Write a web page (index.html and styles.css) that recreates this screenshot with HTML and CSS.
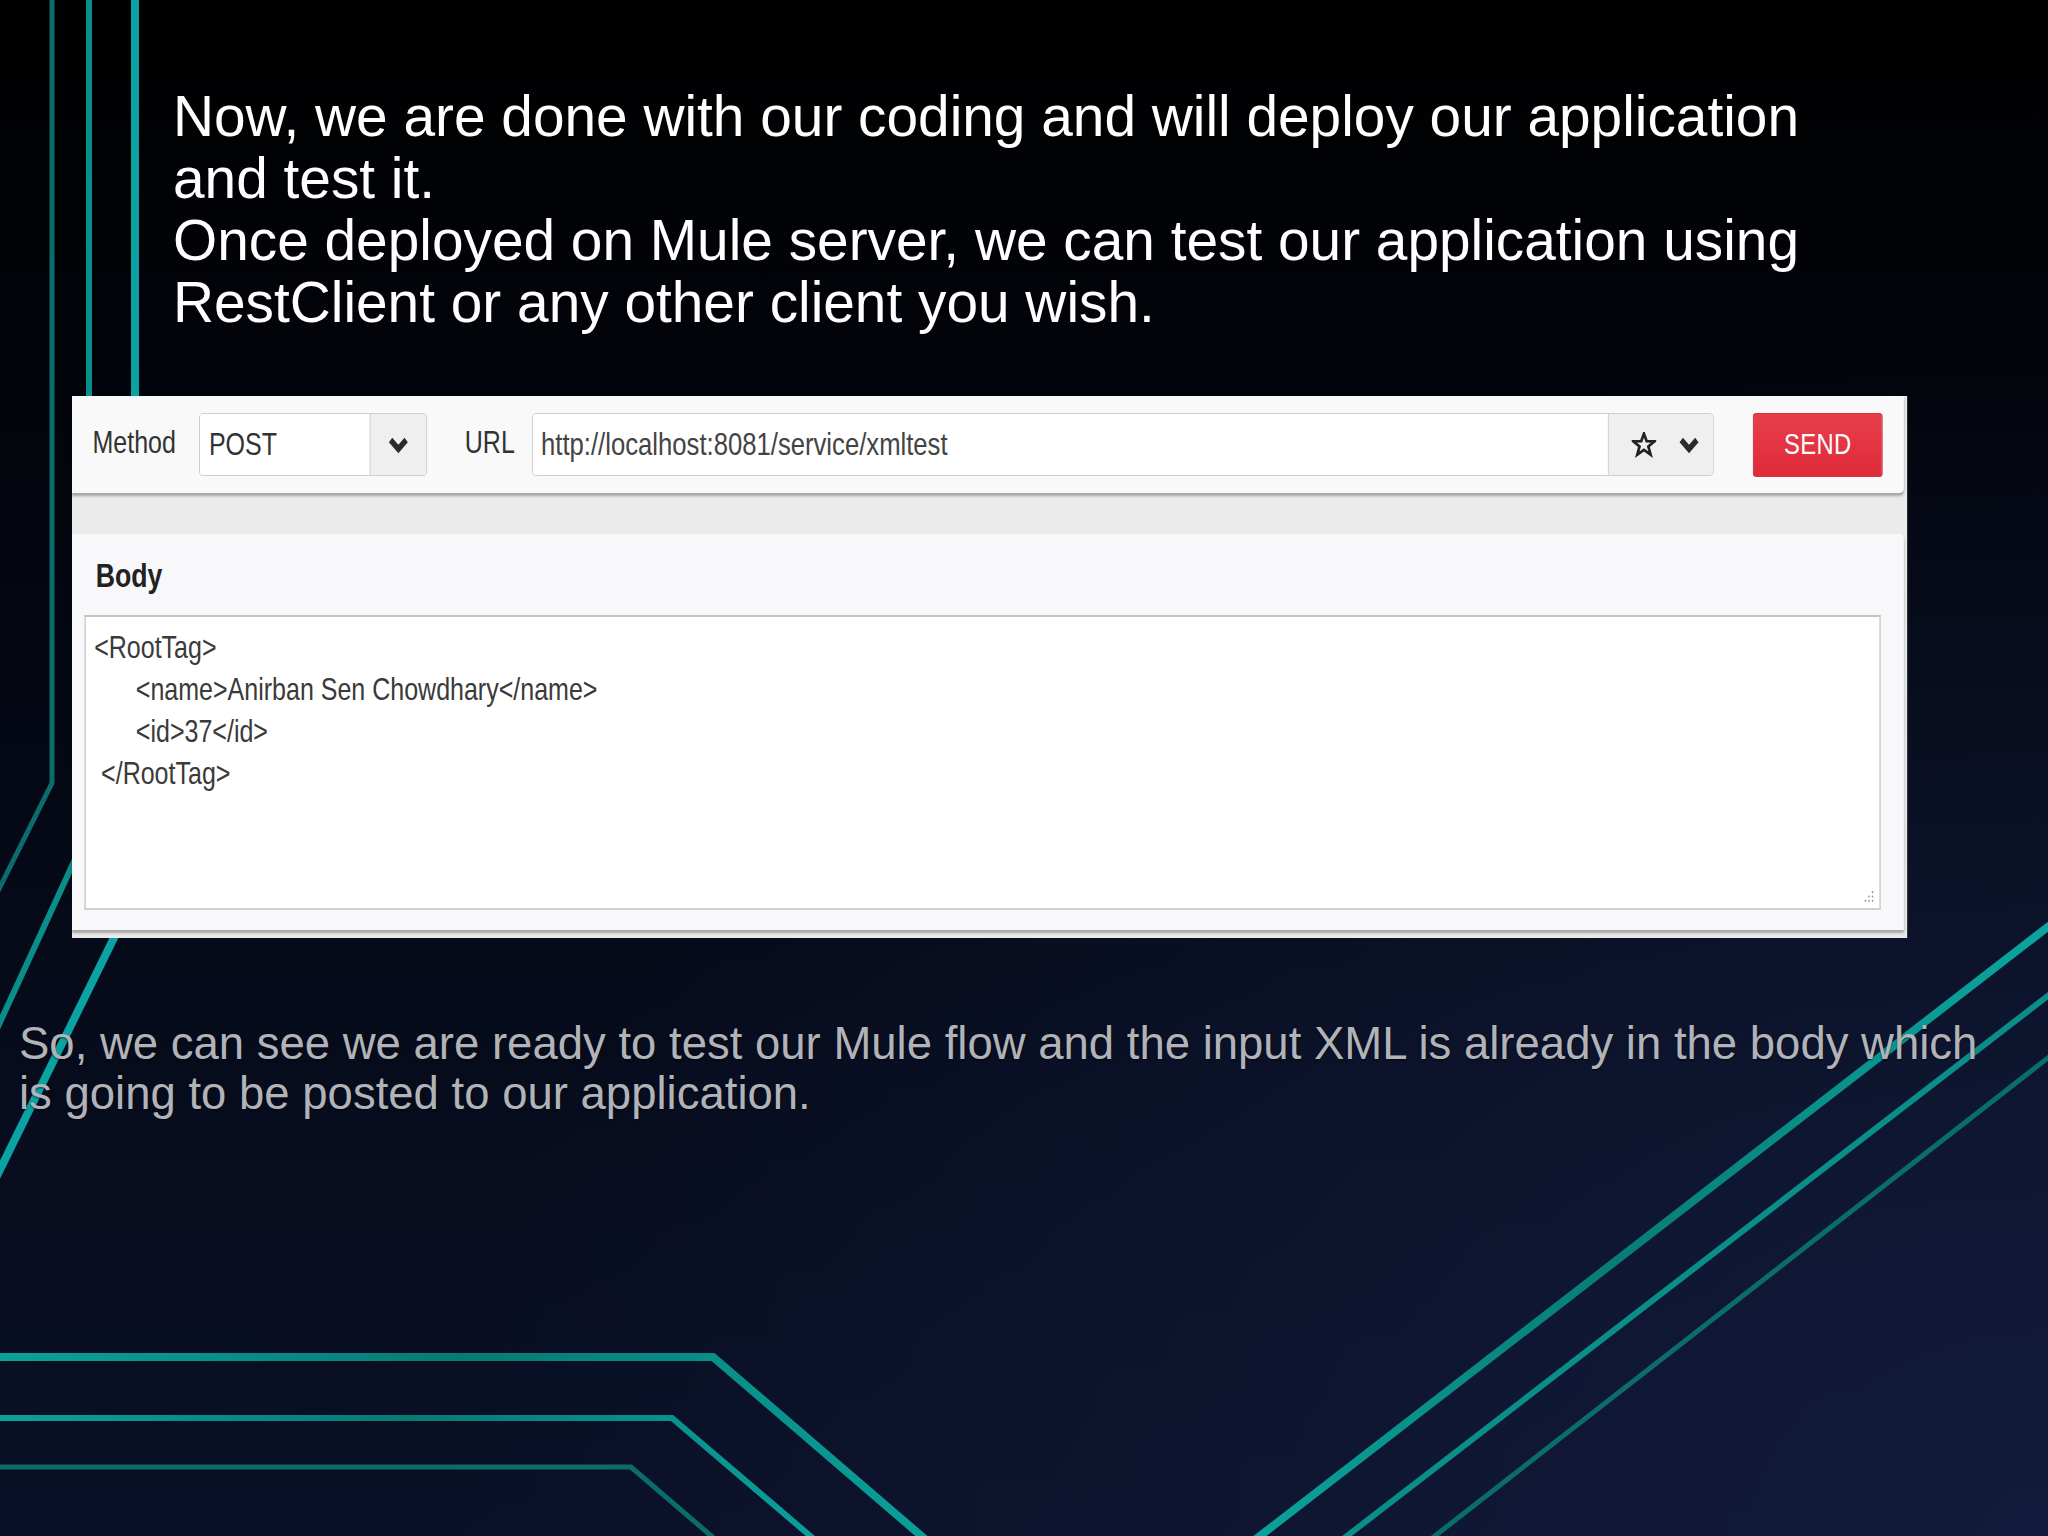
FILE: index.html
```html
<!DOCTYPE html>
<html lang="en">
<head>
    <meta charset="UTF-8">
    <title>Testing the Mule flow</title>
    <link rel="stylesheet" href="styles.css">
</head>
<body>
    <div class="slide">
        <!-- background strokes of the slide theme -->
        <svg class="deco" viewBox="0 0 2048 1536" width="2048" height="1536">
            <defs>
                <linearGradient id="hline" x1="0" y1="0" x2="1" y2="0">
                    <stop offset="0" stop-color="#0aa29c"/>
                    <stop offset="0.5" stop-color="#077a74"/>
                    <stop offset="1" stop-color="#0a9f99"/>
                </linearGradient>
                <linearGradient id="dline" x1="1" y1="0" x2="0" y2="1">
                    <stop offset="0" stop-color="#0aa7a0"/>
                    <stop offset="0.55" stop-color="#087c76"/>
                    <stop offset="1" stop-color="#0aa39c"/>
                </linearGradient>
            </defs>
            <polyline points="52,-10 52,783 -10,907" class="ln ln-dark" stroke-width="5"/>
            <polyline points="89,-10 89,829 -10,1044" class="ln ln-mid" stroke-width="6"/>
            <polyline points="135,-10 135,895 -10,1190" class="ln ln-bright" stroke-width="8"/>

            <polyline points="-10,1357 713,1357 933,1546" stroke="url(#hline)" fill="none" stroke-width="8"/>
            <polyline points="-10,1418 672,1418 822,1546" stroke="url(#hline)" fill="none" stroke-width="6"/>
            <polyline points="-10,1467 631,1467 723,1546" class="ln ln-dark" stroke-width="5"/>

            <line x1="2058" y1="919" x2="1247" y2="1546" stroke="url(#dline)" stroke-width="8"/>
            <line x1="2058" y1="988" x2="1334" y2="1546" class="ln ln-mid" stroke-width="6"/>
            <line x1="2058" y1="1050" x2="1422" y2="1546" class="ln ln-dark" stroke-width="5"/>
        </svg>

        <div class="title">
            <p>Now, we are done with our coding and will deploy our application<br>and test it.</p>
            <p>Once deployed on Mule server, we can test our application using<br>RestClient or any other client you wish.</p>
        </div>

        <!-- the RESTClient capture is pasted in squeezed horizontally -->
        <div class="shot">
            <div class="toolbar">
                <span class="field-label">Method</span>
                <div class="select">
                    <span class="select-value">POST</span>
                    <span class="select-btn">
                        <svg class="chevron" viewBox="0 0 26 18"><path d="M3.5 4 L13 13 L22.5 4"/></svg>
                    </span>
                </div>
                <span class="field-label url-label">URL</span>
                <div class="url-group">
                    <span class="url-input">http://localhost:8081/service/xmltest</span>
                    <span class="url-addon">
                        <svg class="star" viewBox="0 0 24 24" preserveAspectRatio="none"><polygon points="12,1.5 14.6,8.4 22.4,8.6 16.3,13.4 18.5,20.9 12,16.5 5.5,20.9 7.7,13.4 1.6,8.6 9.4,8.4"/></svg>
                        <svg class="chevron" viewBox="0 0 26 18"><path d="M3.5 4 L13 13 L22.5 4"/></svg>
                    </span>
                </div>
                <button class="send-btn">SEND</button>
            </div>

            <div class="body-card">
                <h2>Body</h2>
                <div class="body-text">
<pre>&lt;RootTag&gt;
      &lt;name&gt;Anirban Sen Chowdhary&lt;/name&gt;
      &lt;id&gt;37&lt;/id&gt;
 &lt;/RootTag&gt;</pre>
                    <svg class="grip" viewBox="0 0 12 12">
                        <circle cx="10" cy="2" r="1"/>
                        <circle cx="10" cy="6" r="1"/>
                        <circle cx="6" cy="6" r="1"/>
                        <circle cx="10" cy="10" r="1"/>
                        <circle cx="6" cy="10" r="1"/>
                        <circle cx="2" cy="10" r="1"/>
                    </svg>
                </div>
            </div>
        </div>

        <p class="caption">So, we can see we are ready to test our Mule flow and the input XML is already in the body which<br>is going to be posted to our application.</p>
    </div>
</body>
</html>
```

FILE: styles.css
```css
* {
    margin: 0;
    padding: 0;
    box-sizing: border-box;
}

body {
    width: 2048px;
    height: 1536px;
    overflow: hidden;
    font-family: 'Liberation Sans', Arial, sans-serif;
    background: #000;
}

.slide {
    position: relative;
    width: 2048px;
    height: 1536px;
    overflow: hidden;
    background:
        radial-gradient(ellipse at 100% 100%, #121b3b 0%, rgba(18, 27, 59, 0) 55%),
        linear-gradient(180deg, #000000 0%, #03060f 35%, #070c1d 70%, #0a1027 100%);
}

.deco {
    position: absolute;
    top: 0;
    left: 0;
}

.ln {
    fill: none;
}

.ln-dark {
    stroke: #0b6d6b;
}

.ln-mid {
    stroke: #0a8e8a;
}

.ln-bright {
    stroke: #0aa2a2;
}

.title,
.shot,
.caption {
    position: relative;
}

.title {
    padding: 86px 0 0 173px;
    color: #fff;
    font-size: 56.8px;
    line-height: 62px;
}

/* screenshot of the RESTClient window, laid out at its own width
   and squeezed to 82% like the pasted image */
.shot {
    margin: 62px 0 0 72px;
    width: 2238px;
    padding-bottom: 8px;
    background: #ebebeb;
    font-size: 30.5px;
    color: #333;
    transform: scaleX(0.82);
    transform-origin: 0 0;
}

.toolbar {
    display: flex;
    align-items: center;
    height: 97px;
    margin-right: 4px;
    margin-bottom: 41px;
    padding: 0 25px;
    background: #f9f9f9;
    border-bottom-right-radius: 5px;
    box-shadow: 0 3px 3px rgba(0, 0, 0, 0.3);
}

.field-label {
    width: 130px;
    padding-bottom: 4px;
}

.url-label {
    width: 82px;
    margin-left: 46px;
}

.select,
.url-group {
    display: flex;
    height: 63px;
    border: 1px solid #c9c9c9;
    border-radius: 5px;
    overflow: hidden;
}

.select {
    width: 278px;
}

.select-value,
.url-input {
    flex: 1;
    display: flex;
    align-items: center;
    padding-left: 11px;
    background: #fff;
}

.url-input {
    padding-left: 10px;
    font-size: 31.3px;
    color: #444;
}

.select-btn,
.url-addon {
    display: flex;
    align-items: center;
    background: #efefef;
    border-left: 1px solid #c9c9c9;
}

.select-btn {
    width: 69px;
    justify-content: center;
}

.url-group {
    width: 1441px;
}

.url-addon {
    width: 128px;
    padding-left: 28px;
    gap: 27px;
}

.chevron {
    width: 26px;
    height: 18px;
    fill: none;
    stroke: #2b2b2b;
    stroke-width: 6;
}

.star {
    width: 30px;
    height: 26px;
    fill: none;
    stroke: #222;
    stroke-width: 2.6;
}

.send-btn {
    width: 158px;
    height: 64px;
    margin-left: 48px;
    border: 1px solid #c8202e;
    border-radius: 3px;
    background: linear-gradient(#e83e4b, #e02a39);
    color: #fff;
    font-family: inherit;
    font-size: 29px;
    letter-spacing: 0.5px;
}

.body-card {
    height: 396px;
    margin-right: 4px;
    padding: 22px 28px 0 15px;
    background: #f8f8fa;
    border-top-right-radius: 5px;
    box-shadow: 0 3px 3px rgba(0, 0, 0, 0.3);
}

.body-card h2 {
    padding-left: 14px;
    font-size: 32.5px;
    line-height: 40px;
    font-weight: bold;
    color: #222;
    margin-bottom: 19px;
}

.body-text {
    position: relative;
    height: 295px;
    padding: 9px 10px;
    background: #fff;
    border: 2px solid #cfcfcf;
    border-top-color: #c4c4c4;
}

.body-text pre {
    font-family: inherit;
    font-size: 30.5px;
    line-height: 42px;
    color: #3a3a3a;
}

.grip {
    position: absolute;
    right: 5px;
    bottom: 5px;
    width: 15px;
    height: 13px;
    fill: #9a9a9a;
}

.caption {
    margin-top: 81px;
    padding-left: 19px;
    color: #b1b3b8;
    font-size: 45.5px;
    line-height: 49.5px;
    text-shadow: 0 1px 2px rgba(0, 0, 0, 0.6);
}
```
